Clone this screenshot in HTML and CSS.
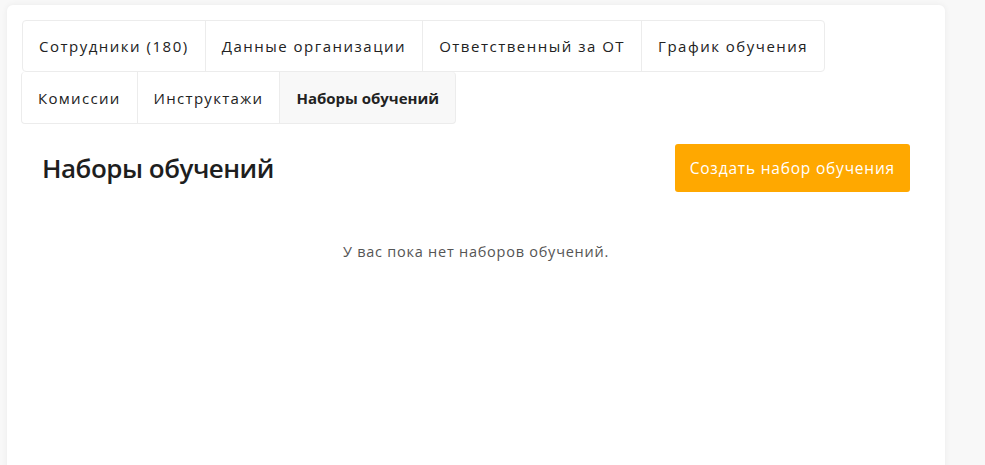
FILE: index.html
```html
<!DOCTYPE html>
<html lang="ru">
<head>
<meta charset="utf-8">
<title>Наборы обучений</title>
<link rel="stylesheet" href="styles.css">
</head>
<body>
<div class="card">
  <div class="tabs">
    <div class="tab-row">
      <div class="tab first">Сотрудники (180)</div>
      <div class="tab">Данные организации</div>
      <div class="tab">Ответственный за ОТ</div>
      <div class="tab last">График обучения</div>
    </div>
    <div class="tab-row second">
      <div class="tab first">Комиссии</div>
      <div class="tab">Инструктажи</div>
      <div class="tab last active">Наборы обучений</div>
    </div>
  </div>
  <div class="header">
    <h1 class="title">Наборы обучений</h1>
    <button class="btn">Создать набор обучения</button>
  </div>
  <p class="empty">У вас пока нет наборов обучений.</p>
</div>
</body>
</html>
```
FILE: styles.css
```css
html, body {
  margin: 0;
  padding: 0;
  background: #f8f8f8;
  font-family: "Open Sans", "Lato", sans-serif;
  height: 100%;
  overflow: hidden;
}
.card {
  margin: 5px 40px 0 7px;
  background: #fff;
  border-radius: 6px;
  box-shadow: 0 0 6px rgba(0,0,0,0.06);
  padding: 15px 15px 0 15px;
  min-height: 600px;
}
.tabs {
  display: flex;
  flex-direction: column;
}
.tab-row {
  display: flex;
}
.tab-row.second {
  margin-left: -1px;
}
.tab {
  height: 50px;
  display: flex;
  align-items: center;
  padding: 0 16px;
  border: 1px solid #ececec;
  margin-left: -1px;
  font-size: 15px;
  letter-spacing: 1.5px;
  color: #222;
}
.tab.first {
  margin-left: 0;
  border-radius: 4px 0 0 4px;
}
.tab.last {
  border-radius: 0 4px 4px 0;
}
.tab-row.second .tab {
  border-top: none;
  height: 51px;
  letter-spacing: 1.3px;
}
.tab-row.second .tab.active {
  background: #f8f8f8;
  font-weight: 700;
  letter-spacing: 0;
  padding: 0 16px;
}
.header {
  display: flex;
  justify-content: space-between;
  align-items: center;
  padding: 0 20px;
  margin-top: 20px;
}
.title {
  margin: 0;
  font-size: 26px;
  font-weight: 600;
  color: #1e1e1e;
  letter-spacing: -0.5px;
}
.btn {
  background: #ffa800;
  color: #fff;
  border: none;
  border-radius: 3px;
  height: 48px;
  padding: 0 15px;
  font-family: inherit;
  font-size: 15.5px;
  letter-spacing: 0.8px;
}
.empty {
  text-align: center;
  margin: 50px 0 0;
  font-size: 14.5px;
  color: #555;
  letter-spacing: 0.75px;
}
```
